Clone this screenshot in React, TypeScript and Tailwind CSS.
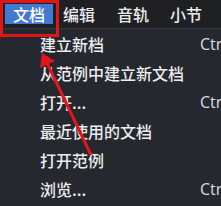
import React from "react";

const items: { label: string; sc?: boolean }[] = [
  { label: "建立新档", sc: true },
  { label: "从范例中建立新文档" },
  { label: "打开...", sc: true },
  { label: "最近使用的文档" },
  { label: "打开范例" },
  { label: "浏览...", sc: true },
];

export default function App() {
  return (
    <div
      className="relative w-[221px] h-[206px] overflow-hidden bg-[#25282e] text-[#ececec] font-medium"
      style={{ fontFamily: '"Noto Sans CJK SC", "Noto Sans", sans-serif' }}
    >
      <div className="h-[29px] bg-[#1e2024] border-b border-[#33363d] flex items-start text-[16px] leading-[20px]">
        <div className="mt-[4px] ml-[5px] w-[48px] h-[20px] bg-[#4279d3] flex items-center justify-center text-white">
          文档
        </div>
        <div className="mt-[4px] ml-[10px]">编辑</div>
        <div className="mt-[4px] ml-[22px]">音轨</div>
        <div className="mt-[4px] ml-[21px]">小节</div>
      </div>
      <div className="flex flex-col">
        {items.map((it) => (
          <div key={it.label} className="relative h-[29px] flex items-center whitespace-nowrap text-[16px] leading-[20px]">
            <span className="ml-[40px]">{it.label}</span>
            {it.sc && (
              <span
                className="absolute left-[200px] text-[16px] text-[#d6dde6] font-normal"
                style={{ fontFamily: '"Open Sans", sans-serif' }}
              >
                Ctrl
              </span>
            )}
          </div>
        ))}
      </div>
      <div className="absolute left-0 top-0 w-[59px] h-[37px] border-[3px] border-[#e01515]" />
      <svg className="absolute left-0 top-0" width="221" height="206" viewBox="0 0 221 206">
        <line x1="91" y1="155" x2="47" y2="63" stroke="#e3141b" strokeWidth="3" />
        <polygon points="42,53 40,68 55,61" fill="#e3141b" />
      </svg>
    </div>
  );
}
